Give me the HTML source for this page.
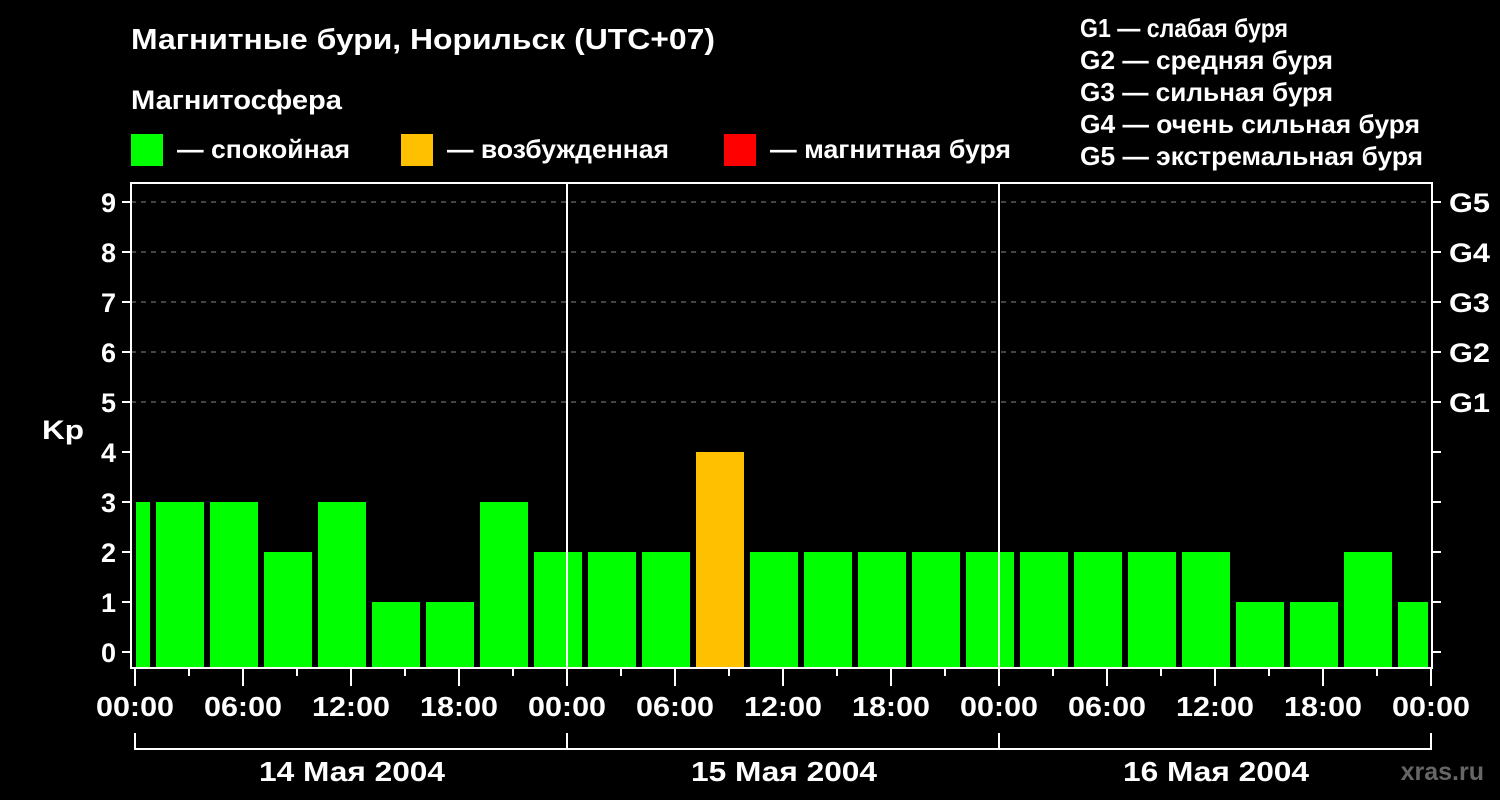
<!DOCTYPE html>
<html><head><meta charset="utf-8"><style>
html,body{margin:0;padding:0;background:#000;width:1500px;height:800px;overflow:hidden}
svg text{font-family:"Liberation Sans",Arial,sans-serif;font-weight:bold;fill:#fff}
</style></head><body>
<svg width="1500" height="800" xmlns="http://www.w3.org/2000/svg">
<rect width="1500" height="800" fill="#000"/>
<text x="131" y="49" font-size="29" textLength="584" lengthAdjust="spacingAndGlyphs">Магнитные бури, Норильск (UTC+07)</text>
<text x="131" y="109" font-size="27" textLength="211" lengthAdjust="spacingAndGlyphs">Магнитосфера</text>
<rect x="131" y="134" width="32" height="32" fill="#00ff00"/>
<text x="177" y="158" font-size="26" textLength="173" lengthAdjust="spacingAndGlyphs">— спокойная</text>
<rect x="401" y="134" width="32" height="32" fill="#ffc000"/>
<text x="447" y="158" font-size="26" textLength="222" lengthAdjust="spacingAndGlyphs">— возбужденная</text>
<rect x="724" y="134" width="32" height="32" fill="#ff0000"/>
<text x="770" y="158" font-size="26" textLength="241" lengthAdjust="spacingAndGlyphs">— магнитная буря</text>
<g font-size="26">
<text x="1080" y="37" textLength="208" lengthAdjust="spacingAndGlyphs">G1 — слабая буря</text>
<text x="1080" y="69" textLength="253" lengthAdjust="spacingAndGlyphs">G2 — средняя буря</text>
<text x="1080" y="101" textLength="253" lengthAdjust="spacingAndGlyphs">G3 — сильная буря</text>
<text x="1080" y="133" textLength="340" lengthAdjust="spacingAndGlyphs">G4 — очень сильная буря</text>
<text x="1080" y="165" textLength="343" lengthAdjust="spacingAndGlyphs">G5 — экстремальная буря</text>
</g>
<g stroke="#888" stroke-width="1" stroke-dasharray="5,5">
<line x1="131" y1="202" x2="1432" y2="202"/><line x1="131" y1="252" x2="1432" y2="252"/>
<line x1="131" y1="302" x2="1432" y2="302"/><line x1="131" y1="352" x2="1432" y2="352"/>
<line x1="131" y1="402" x2="1432" y2="402"/>
</g>
<g fill="#00ff00">
<rect x="136" y="502" width="14" height="166"/>
<rect x="156" y="502" width="48" height="166"/>
<rect x="210" y="502" width="48" height="166"/>
<rect x="264" y="552" width="48" height="116"/>
<rect x="318" y="502" width="48" height="166"/>
<rect x="372" y="602" width="48" height="66"/>
<rect x="426" y="602" width="48" height="66"/>
<rect x="480" y="502" width="48" height="166"/>
<rect x="534" y="552" width="48" height="116"/>
<rect x="588" y="552" width="48" height="116"/>
<rect x="642" y="552" width="48" height="116"/>
<rect x="696" y="452" width="48" height="216" fill="#ffc000"/>
<rect x="750" y="552" width="48" height="116"/>
<rect x="804" y="552" width="48" height="116"/>
<rect x="858" y="552" width="48" height="116"/>
<rect x="912" y="552" width="48" height="116"/>
<rect x="966" y="552" width="48" height="116"/>
<rect x="1020" y="552" width="48" height="116"/>
<rect x="1074" y="552" width="48" height="116"/>
<rect x="1128" y="552" width="48" height="116"/>
<rect x="1182" y="552" width="48" height="116"/>
<rect x="1236" y="602" width="48" height="66"/>
<rect x="1290" y="602" width="48" height="66"/>
<rect x="1344" y="552" width="48" height="116"/>
<rect x="1398" y="602" width="30" height="66"/>
</g>
<g stroke="#fff" stroke-width="2" fill="none">
<rect x="131" y="183" width="1301" height="485"/>
<line x1="567" y1="183" x2="567" y2="668"/><line x1="999" y1="183" x2="999" y2="668"/>
<path d="M122 202h9M122 252h9M122 302h9M122 352h9M122 402h9M122 452h9M122 502h9M122 552h9M122 602h9M122 652h9"/>
<path d="M1432 202h9M1432 252h9M1432 302h9M1432 352h9M1432 402h9M1432 452h9M1432 502h9M1432 552h9M1432 602h9M1432 652h9"/>
<path d="M135 668v18M189 668v8M243 668v18M297 668v8M351 668v18M405 668v8M459 668v18M513 668v8M567 668v18M621 668v8M675 668v18M729 668v8M783 668v18M837 668v8M891 668v18M945 668v8M999 668v18M1053 668v8M1107 668v18M1161 668v8M1215 668v18M1269 668v8M1323 668v18M1377 668v8M1431 668v18"/>
<path d="M135 733v16h1296v-16M567 733v16M999 733v16"/>
</g>
<g font-size="27" text-anchor="end">
<text x="116" y="212">9</text><text x="116" y="262">8</text><text x="116" y="312">7</text>
<text x="116" y="362">6</text><text x="116" y="412">5</text><text x="116" y="462">4</text>
<text x="116" y="512">3</text><text x="116" y="562">2</text><text x="116" y="612">1</text>
<text x="116" y="662">0</text>
</g>
<text x="42" y="439" font-size="27" textLength="42" lengthAdjust="spacingAndGlyphs">Kp</text>
<g font-size="27">
<text x="1449" y="212" textLength="41" lengthAdjust="spacingAndGlyphs">G5</text><text x="1449" y="262" textLength="41" lengthAdjust="spacingAndGlyphs">G4</text><text x="1449" y="312" textLength="41" lengthAdjust="spacingAndGlyphs">G3</text>
<text x="1449" y="362" textLength="41" lengthAdjust="spacingAndGlyphs">G2</text><text x="1449" y="412" textLength="41" lengthAdjust="spacingAndGlyphs">G1</text>
</g>
<g font-size="28">
<text x="96" y="716" textLength="78" lengthAdjust="spacingAndGlyphs">00:00</text><text x="204" y="716" textLength="78" lengthAdjust="spacingAndGlyphs">06:00</text><text x="312" y="716" textLength="78" lengthAdjust="spacingAndGlyphs">12:00</text>
<text x="420" y="716" textLength="78" lengthAdjust="spacingAndGlyphs">18:00</text><text x="528" y="716" textLength="78" lengthAdjust="spacingAndGlyphs">00:00</text><text x="636" y="716" textLength="78" lengthAdjust="spacingAndGlyphs">06:00</text>
<text x="744" y="716" textLength="78" lengthAdjust="spacingAndGlyphs">12:00</text><text x="852" y="716" textLength="78" lengthAdjust="spacingAndGlyphs">18:00</text><text x="960" y="716" textLength="78" lengthAdjust="spacingAndGlyphs">00:00</text>
<text x="1068" y="716" textLength="78" lengthAdjust="spacingAndGlyphs">06:00</text><text x="1176" y="716" textLength="78" lengthAdjust="spacingAndGlyphs">12:00</text><text x="1284" y="716" textLength="78" lengthAdjust="spacingAndGlyphs">18:00</text>
<text x="1392" y="716" textLength="78" lengthAdjust="spacingAndGlyphs">00:00</text>
<text x="259" y="781" textLength="186" lengthAdjust="spacingAndGlyphs">14 Мая 2004</text><text x="691" y="781" textLength="186" lengthAdjust="spacingAndGlyphs">15 Мая 2004</text><text x="1123" y="781" textLength="186" lengthAdjust="spacingAndGlyphs">16 Мая 2004</text>
</g>
<text x="1484" y="780" font-size="25" text-anchor="end" style="fill:#666">xras.ru</text>
</svg>
</body></html>
